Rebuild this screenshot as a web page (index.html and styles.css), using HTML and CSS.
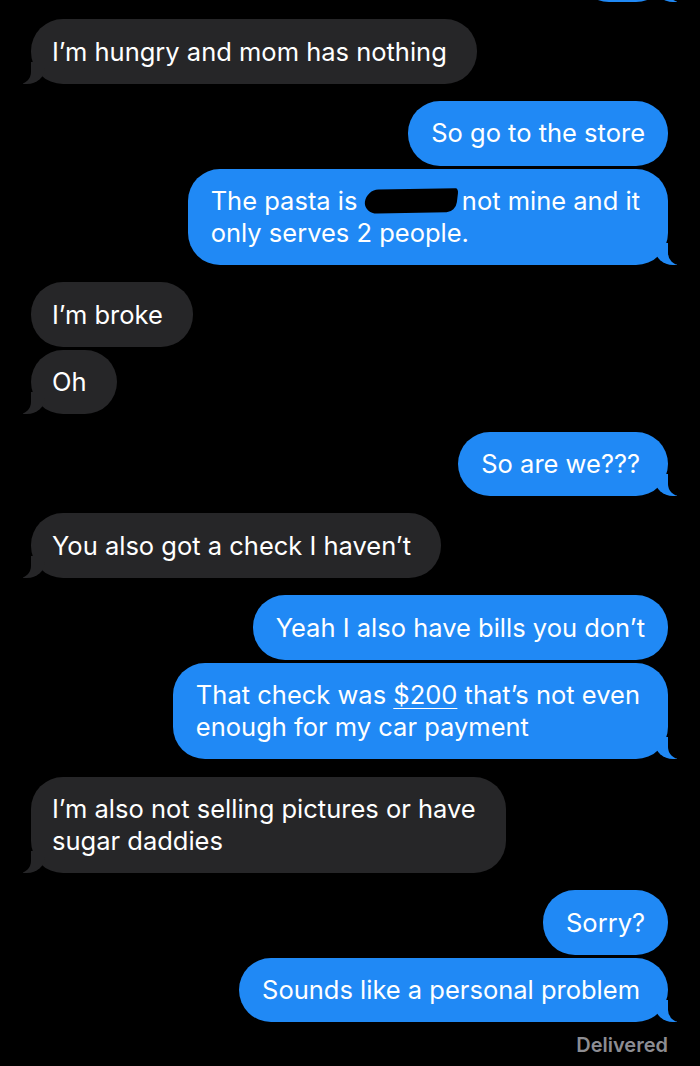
FILE: index.html
```html
<!DOCTYPE html>
<html lang="en">
<head>
    <meta charset="UTF-8">
    <meta name="viewport" content="width=device-width, initial-scale=1.0">
    <title>Messages</title>
    <link rel="stylesheet" href="styles.css">
</head>
<body>
    <div class="thread">
        <!-- previous message, mostly scrolled off -->
        <div class="group out first">
            <div class="bubble tail stub"></div>
        </div>

        <div class="group in">
            <div class="bubble tail">I’m hungry and mom has nothing</div>
        </div>

        <div class="group out">
            <div class="bubble">So go to the store</div>
            <div class="bubble tail">The pasta is <span class="redact"></span> not mine and it<br>only serves 2 people.</div>
        </div>

        <div class="group in">
            <div class="bubble">I’m broke</div>
            <div class="bubble tail">Oh</div>
        </div>

        <div class="group out">
            <div class="bubble tail">So are we???</div>
        </div>

        <div class="group in">
            <div class="bubble tail">You also got a check I haven’t</div>
        </div>

        <div class="group out">
            <div class="bubble">Yeah I also have bills you don’t</div>
            <div class="bubble tail">That check was <span class="link">$200</span> that’s not even<br>enough for my car payment</div>
        </div>

        <div class="group in">
            <div class="bubble tail">I’m also not selling pictures or have<br>sugar daddies</div>
        </div>

        <div class="group out">
            <div class="bubble">Sorry?</div>
            <div class="bubble tail">Sounds like a personal problem</div>
        </div>

        <div class="status">Delivered</div>
    </div>
</body>
</html>
```

FILE: styles.css
```css
body { margin: 0; background: #000; font-family: Inter, "Noto Sans", sans-serif; color: #fff; }
.thread { display: flex; flex-direction: column; padding: 0 32px 0 31px; }

.group { display: flex; flex-direction: column; gap: 3px; margin-top: 17.3px; }
.group.first { margin-top: -62px; }
.in { align-items: flex-start; }
.out { align-items: flex-end; }

.bubble {
    position: relative;
    padding: 16.25px 23px;
    border-radius: 32px;
    font-size: 25.5px;
    line-height: 32px;
    white-space: nowrap;
}
.in .bubble { background: #262628; padding-left: 21px; padding-right: 30px; }
.out .bubble { background: #2089f5; }
.out .bubble.tail { padding-right: 28px; }
.stub { width: 91px; height: 64px; padding: 0; box-sizing: border-box; }

/* tails */
.tail::before, .tail::after { content: ""; position: absolute; bottom: 0; height: 22px; }
.out .tail::before { right: -9px; width: 22px; background: #2089f5; border-bottom-left-radius: 18px 16px; }
.out .tail::after { right: -13px; width: 13px; background: #000; border-bottom-left-radius: 12px; }
.in .tail::before { left: -8px; width: 22px; background: #262628; border-bottom-right-radius: 18px 16px; }
.in .tail::after { left: -12px; width: 12px; background: #000; border-bottom-right-radius: 12px; }

.redact {
    display: inline-block;
    width: 92px;
    height: 24px;
    margin: 0 -2px 0 0;
    vertical-align: -3px;
    background: #000;
    border-radius: 12px 3px 9px 14px / 12px 5px 10px 12px;
    transform: skewX(-8deg) rotate(-1deg);
}
.link { text-decoration: underline; text-decoration-thickness: 1px; text-underline-offset: 4px; }

.status {
    align-self: flex-end;
    margin-top: 10px;
    color: #8d8d92;
    font-size: 20px;
    font-weight: 600;
    line-height: 26px;
}
```
